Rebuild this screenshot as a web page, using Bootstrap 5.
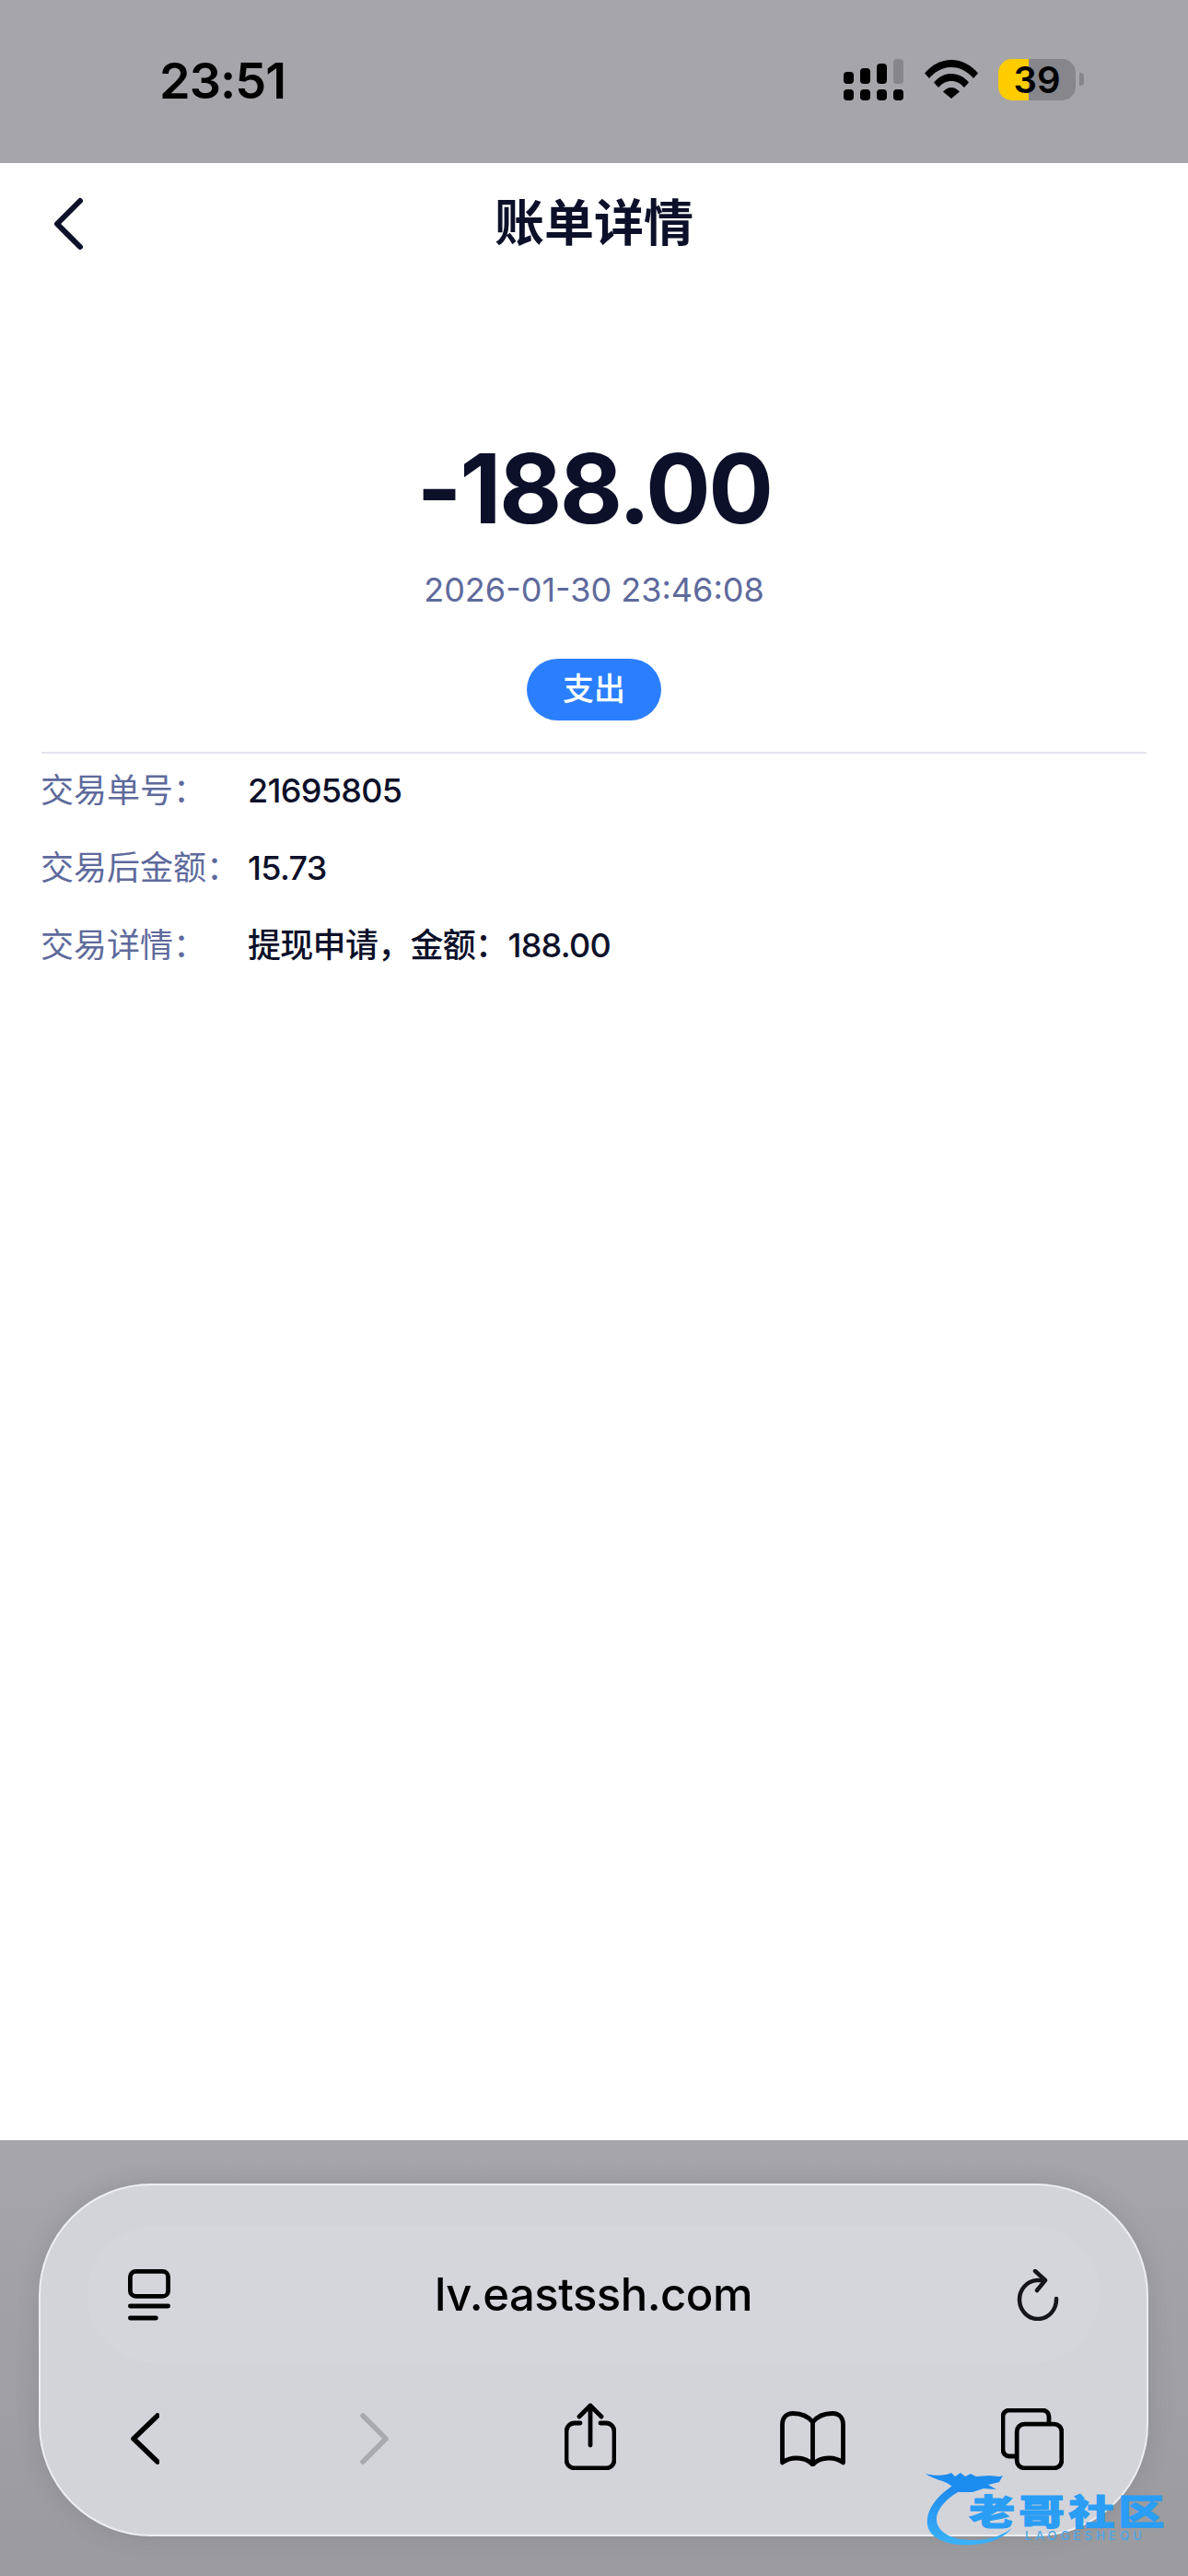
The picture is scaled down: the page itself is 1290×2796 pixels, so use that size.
<!DOCTYPE html>
<html lang="zh-CN">
<head>
  <meta charset="UTF-8" />
  <meta name="viewport" content="width=device-width, initial-scale=1" />
  <title>账单详情</title>
  <link href="https://cdn.jsdelivr.net/npm/bootstrap@5.3.0/dist/css/bootstrap.min.css" rel="stylesheet" />
  <style>
    html, body { margin: 0; background: #fff; }
    body { font-family: Inter, "Noto Sans CJK SC", sans-serif; }
    svg { display: block; flex: none; }
    .screen { width: 1290px; height: 2796px; overflow: hidden; }

    .status-strip { height: 177px; background: #a5a5aa; padding: 0 113px 0 173px; color: #000; }
    .clock { font-size: 54px; font-weight: 600; line-height: 1; letter-spacing: -1px; margin-top: 61px; }
    .status-icons { margin-top: 64px; }
    .wifi-icon { margin-left: 23px; margin-top: 1px; }
    .battery-body { width: 84px; height: 45px; margin-left: 22px; border-radius: 15px; font-size: 40px; font-weight: 600; line-height: 45px; text-align: center; background: linear-gradient(90deg, #ffcc00 39%, #86868c 39%); }
    .battery-nub { width: 5px; height: 14px; margin: 15px 0 0 4px; border-radius: 0 4px 4px 0; background: #86868c; }

    .bill-page { height: 2146px; background: #fff; color: #0c1029; }
    .bill-head { height: 132px; padding-left: 57px; position: relative; }
    .bill-title { position: absolute; inset: 0; text-align: center; font-size: 54px; font-weight: 600; line-height: 132px; }
    .bill-amount { margin-top: 160px; font-size: 105px; font-weight: 700; line-height: 122px; letter-spacing: -2.5px; }
    .bill-time { margin-top: 24px; font-size: 36px; line-height: 50px; color: #5e6a9c; }
    .bill-tag { margin-top: 50px; width: 146px; height: 67px; border-radius: 34px; background: #2b7fff; color: #fff; font-size: 34px; font-weight: 500; line-height: 65px; }
    .bill-rule { margin: 34px 45px 0; height: 2px; background: #e2e4ee; }
    .bill-rows { padding: 0 44px; }
    .bill-row { height: 84px; font-size: 36px; line-height: 81px; }
    .bill-label { width: 225px; color: #5e6a9c; }
    .bill-value { font-weight: 500; letter-spacing: -.7px; }

    .browser-area { height: 473px; padding: 47px 43px 0 42px; background: linear-gradient(180deg, #a5a5aa, #9a9a9f); position: relative; }
    .browser-panel { height: 383px; border: 2px solid #eceef2; border-radius: 122px; background: #d3d4da; padding: 44px 51px 0; box-shadow: 0 0 24px rgba(70, 70, 80, .18); }
    .url-pill { height: 149px; border-radius: 74px; background: #d5d6dc; padding: 0 44px 0 44px; }
    .url-text { font-size: 49px; font-weight: 500; color: #000; line-height: 1; letter-spacing: -.5px; }
    .tool-row { margin-top: 54px; padding-left: 47px; }
    .tool-fwd { margin-left: 218px; }
    .tool-share { margin-left: 191px; margin-top: -11px; }
    .tool-book { margin-left: 178px; margin-top: -2px; }
    .tool-tabs { margin-left: 169px; margin-top: -5px; }

    .mark-logo { position: absolute; left: 1005px; top: 359px; width: 270px; height: 84px; color: #2d9ff3; }
    .mark-logo svg { position: absolute; left: 0; top: 0; }
    .mark-name { position: absolute; left: 47px; top: 26px; font-size: 38px; font-weight: 900; line-height: 36px; letter-spacing: 3px; white-space: nowrap; transform: scaleX(1.32); transform-origin: left center; color: #2a9df4; -webkit-text-stroke: 1px #2a9df4; }
    .mark-sub { position: absolute; left: 108px; top: 63px; font-size: 13px; font-weight: 500; line-height: 14px; letter-spacing: 4.2px; color: #4aa8ea; white-space: nowrap; }
  </style>
</head>
<body>
  <div class="screen">
    <div class="status-strip d-flex justify-content-between align-items-start">
      <div class="clock">23:51</div>
      <div class="status-icons d-flex align-items-start">
        <svg width="65" height="46" viewBox="0 0 65 46" fill="#000">
          <rect x="0" y="14" width="11" height="13" rx="4"/>
          <rect x="18" y="10" width="11" height="17" rx="4"/>
          <rect x="36" y="5" width="11" height="22" rx="4"/>
          <rect x="54" y="0" width="11" height="27" rx="4" fill="#86868c"/>
          <rect x="0" y="33" width="11" height="12" rx="4"/>
          <rect x="18" y="33" width="11" height="12" rx="4"/>
          <rect x="36" y="33" width="11" height="12" rx="4"/>
          <rect x="54" y="33" width="11" height="12" rx="4"/>
        </svg>
        <svg class="wifi-icon" width="58" height="42" viewBox="0 0 58 42" fill="#000">
          <path d="M0 14.500C7.500 5.500 17.500 0 29 0S50.500 5.500 58 14.500L53 20C46.500 12.500 38.500 8 29 8S11.500 12.500 5 20Z"/>
          <path d="M10 24.500C15 18.500 21.500 15 29 15S43 18.500 48 24.500L43 30C39 25.500 34.500 23 29 23S19 25.500 15 30Z"/>
          <path d="M20 34.500C22.500 31.800 25.500 30 29 30S35.500 31.800 38 34.500L29 42Z"/>
        </svg>
        <div class="battery-body">39</div>
        <div class="battery-nub"></div>
      </div>
    </div>

    <div class="bill-page">
      <div class="bill-head d-flex align-items-center">
        <div class="bill-title">账单详情</div>
        <svg width="36" height="58" viewBox="0 0 36 58" fill="none" stroke="#0c1029" stroke-width="6" stroke-linecap="round" stroke-linejoin="round"><path d="M30 4 5 29l25 25"/></svg>
      </div>
      <div class="text-center bill-amount">-188.00</div>
      <div class="text-center bill-time">2026-01-30 23:46:08</div>
      <div class="bill-tag mx-auto text-center">支出</div>
      <div class="bill-rule"></div>
      <div class="bill-rows">
        <div class="bill-row d-flex"><div class="bill-label">交易单号：</div><div class="bill-value">21695805</div></div>
        <div class="bill-row d-flex"><div class="bill-label">交易后金额：</div><div class="bill-value">15.73</div></div>
        <div class="bill-row d-flex"><div class="bill-label">交易详情：</div><div class="bill-value">提现申请，金额：188.00</div></div>
      </div>
    </div>

    <div class="browser-area">
      <div class="browser-panel">
        <div class="url-pill d-flex justify-content-between align-items-center">
          <svg width="46" height="56" viewBox="0 0 46 56" fill="none" stroke="#000" stroke-width="4.800" stroke-linecap="round"><rect x="2.400" y="2.400" width="41.200" height="27" rx="6"/><path d="M2.400 40h41.200M2.400 53h28"/></svg>
          <div class="url-text">lv.eastssh.com</div>
          <svg width="46" height="56" viewBox="0 0 46 56" fill="none" stroke="#16161a" stroke-width="4.500" stroke-linecap="round" stroke-linejoin="round"><path d="M43 32a20 21 0 1 1-21-20h6"/><path d="M20 2l11 10-9 11"/></svg>
        </div>
        <div class="tool-row d-flex align-items-start">
          <svg width="31" height="56" viewBox="0 0 31 56" fill="none" stroke="#000" stroke-width="5.500" stroke-linecap="round" stroke-linejoin="round"><path d="M29 3 3 28l26 25"/></svg>
          <svg class="tool-fwd" width="31" height="56" viewBox="0 0 31 56" fill="none" stroke="#a9aab0" stroke-width="5.500" stroke-linecap="round" stroke-linejoin="round"><path d="M3 3l25 25L3 53"/></svg>
          <svg class="tool-share" width="56" height="73" viewBox="0 0 56 73" fill="none" stroke="#000" stroke-width="4.800" stroke-linecap="round" stroke-linejoin="round"><path d="M17 22h-6a9 9 0 0 0-9 9v31a9 9 0 0 0 9 9h34a9 9 0 0 0 9-9V31a9 9 0 0 0-9-9h-6"/><path d="M28 46V3M16 15 28 3l12 12"/></svg>
          <svg class="tool-book" width="71" height="60" viewBox="0 0 71 60" fill="none" stroke="#000" stroke-width="4.800" stroke-linecap="round" stroke-linejoin="round"><path d="M35.500 12C30 5 22 2.500 14 2.500 7 2.500 2.500 7 2.500 14v42C10 50 26 48 35.500 58 45 48 61 50 68.500 56V14C68.500 7 64 2.500 57 2.500 49 2.500 41 5 35.500 12V58"/></svg>
          <svg class="tool-tabs" width="68" height="67" viewBox="0 0 68 67" fill="none" stroke="#000" stroke-width="4.800" stroke-linejoin="round"><path d="M17 52H9a7 7 0 0 1-7-7V9a7 7 0 0 1 7-7h36a7 7 0 0 1 7 7v6"/><rect x="17.200" y="17.200" width="48.600" height="47.600" rx="8"/></svg>
        </div>
      </div>
      <div class="mark-logo">
        <svg width="110" height="84" viewBox="0 0 110 84">
          <defs><linearGradient id="markFill" x1="0" y1="0" x2="0" y2="1"><stop offset="0" stop-color="#1b86ec"/><stop offset="1" stop-color="#3ab2f8"/></linearGradient></defs>
          <path fill="url(#markFill)" d="M36 12C14 24 0 42 2 58c2 16 24 24 50 22 18-1 34-8 42-18-12 9-26 13-42 13C30 75 14 68 12 54 11 42 24 26 48 17Z"/>
          <path fill="#1b8cf0" d="M0 3c12 3 22 2 28-1l4 4 6-4 5 4 6-3 6 3 14-1c6 0 11 2 15 0l-4 7-12 3 9 5-14-1-12 4-14 0-8-6C22 10 10 10 0 3Z"/>
        </svg>
        <div class="mark-name">老哥社区</div>
        <div class="mark-sub">LAOGESHEQU</div>
      </div>
    </div>
  </div>
  <script src="https://cdn.jsdelivr.net/npm/bootstrap@5.3.0/dist/js/bootstrap.bundle.min.js"></script>
</body>
</html>
